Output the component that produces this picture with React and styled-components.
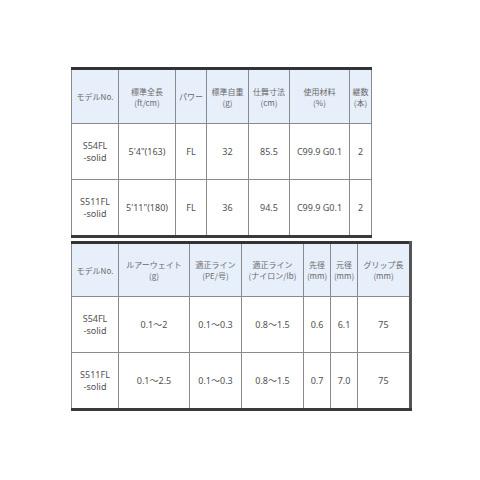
import React from 'react'
import styled, { createGlobalStyle } from 'styled-components'

const GlobalStyle = createGlobalStyle`
  html, body {
    margin: 0;
    padding: 0;
    background: #ffffff;
  }
  body {
    font-family: 'Noto Sans', 'Noto Sans CJK JP', sans-serif;
  }
`;

const Page = styled.div`
  width: 480px;
  height: 480px;
  padding: 67px 0 0 71px;
  box-sizing: border-box;
  display: flex;
  flex-direction: column;
  gap: 3px;
`;

const SpecTable = styled.table`
  border-collapse: collapse;
  table-layout: fixed;
  width: ${props => props.width}px;
  border-top: 3px solid #333333;
  border-bottom: 3px solid #3a3a3a;
  border-left: 1px solid #8a8a8a;
  border-right: ${props => props.thickRight ? 3 : 1}px solid #555555;
`;

const HeadCell = styled.th`
  background: #e7effb;
  color: #6a6a6a;
  font-weight: normal;
  font-size: 8px;
  line-height: 11px;
  height: ${props => props.h || 53}px;
  padding: 0;
  text-align: center;
  vertical-align: middle;
  border: 1px solid #8a8a8a;
  white-space: nowrap;
  font-family: 'Noto Sans CJK JP', sans-serif;
`;

const Cell = styled.td`
  color: #505050;
  font-size: 9px;
  line-height: 12px;
  height: 55px;
  padding: 0;
  text-align: center;
  vertical-align: middle;
  border: 1px solid #8a8a8a;
  white-space: nowrap;
`;

const Line = styled.span`
  display: block;
`;

const specCols = [47, 57, 31, 42, 41, 60, 22];
const specHead = [
  ['モデルNo.'],
  ['標準全長', '(ft/cm)'],
  ['パワー'],
  ['標準自重', '(g)'],
  ['仕舞寸法', '(cm)'],
  ['使用材料', '(%)'],
  ['継数', '(本)'],
];
const specRows = [
  [['S54FL', '-solid'], `5'4"(163)`, 'FL', '32', '85.5', 'C99.9 G0.1', '2'],
  [['S511FL', '-solid'], `5'11"(180)`, 'FL', '36', '94.5', 'C99.9 G0.1', '2'],
];

const lineCols = [47, 71, 52, 62, 27, 27, 53];
const lineHead = [
  ['モデルNo.'],
  ['ルアーウェイト', '(g)'],
  ['適正ライン', '(PE/号)'],
  ['適正ライン', '(ナイロン/lb)'],
  ['先径', '(mm)'],
  ['元径', '(mm)'],
  ['グリップ長', '(mm)'],
];
const lineRows = [
  [['S54FL', '-solid'], '0.1〜2', '0.1〜0.3', '0.8〜1.5', '0.6', '6.1', '75'],
  [['S511FL', '-solid'], '0.1〜2.5', '0.1〜0.3', '0.8〜1.5', '0.7', '7.0', '75'],
];

const renderLines = value =>
  Array.isArray(value)
    ? value.map((text, i) => <Line key={i}>{text}</Line>)
    : value;

const Table = ({ cols, head, rows, thickRight, headHeight }) => (
  <SpecTable width={cols.reduce((a, b) => a + b, 0)} thickRight={thickRight}>
    <colgroup>
      {cols.map((w, i) => <col key={i} style={{ width: w }} />)}
    </colgroup>
    <thead>
      <tr>
        {head.map((h, i) => (
          <HeadCell key={i} h={headHeight}>{renderLines(h)}</HeadCell>
        ))}
      </tr>
    </thead>
    <tbody>
      {rows.map((row, r) => (
        <tr key={r}>
          {row.map((v, i) => <Cell key={i}>{renderLines(v)}</Cell>)}
        </tr>
      ))}
    </tbody>
  </SpecTable>
);

export default function App() {
  return (
    <Page>
      <GlobalStyle />
      <Table cols={specCols} head={specHead} rows={specRows} />
      <Table cols={lineCols} head={lineHead} rows={lineRows} thickRight headHeight={52} />
    </Page>
  );
}
